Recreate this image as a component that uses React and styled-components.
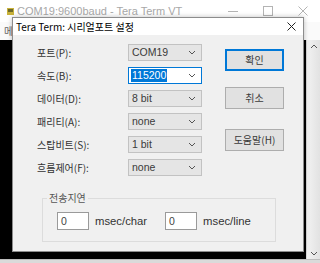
import React from "react";
import styled, { createGlobalStyle } from "styled-components";

const KR = `"Noto Sans CJK KR", "Noto Sans", sans-serif`;
const LAT = `"Liberation Sans", "Noto Sans CJK KR", sans-serif`;

const Global = createGlobalStyle`
  html, body { margin: 0; padding: 0; }
  body { width: 320px; height: 263px; overflow: hidden; background: #fff; font-family: ${KR}; }
`;

const Desktop = styled.div`
  position: relative;
  width: 320px;
  height: 263px;
  overflow: hidden;
`;

/* ---------- background Tera Term VT window ---------- */
const BgWindow = styled.div`
  display: flex;
  flex-direction: column;
  width: 100%;
  height: 100%;
  background: #fff;
`;

const BgTitleBar = styled.div`
  height: 22px;
  display: flex;
  align-items: center;
  padding: 0 0 0 7px;
  color: #a8a8a8;
  font: 11px/22px ${LAT};
`;

const BgTitleText = styled.span`
  margin-left: 3px;
  flex: 1;
`;

const WinCtl = styled.span`
  width: 35px;
  display: flex;
  justify-content: center;
  align-items: center;
`;

const BgMenu = styled.div`
  height: 18px;
  display: flex;
  align-items: center;
  padding-left: 4px;
  font: 10px/18px ${KR};
  color: #666;
  background: #fafafa;
`;

const BgMain = styled.div`
  flex: 1;
  display: flex;
`;

const Terminal = styled.div`
  flex: 1;
  background: #000;
`;

const Scrollbar = styled.div`
  width: 14px;
  display: flex;
  flex-direction: column;
  justify-content: space-between;
  align-items: center;
  background: linear-gradient(to right, #f2f2f2, #e2e2e2);
  border-left: 1px solid #d6d6d6;
  padding: 4px 0 3px;
  box-sizing: border-box;
`;

const BgBottom = styled.div`
  height: 3px;
  background: #dadada;
  border-top: 1px solid #bdbdbd;
`;

/* ---------- dialog ---------- */
const Dialog = styled.div`
  position: absolute;
  left: 12px;
  top: 17px;
  width: 292px;
  height: 235px;
  box-sizing: border-box;
  border: 1px solid #8c8c8c;
  background: #f0f0f0;
  display: flex;
  flex-direction: column;
  box-shadow: 0 0 5px rgba(0, 0, 0, 0.25);
`;

const DTitle = styled.div`
  height: 17px;
  flex: none;
  background: #fff;
  display: flex;
  align-items: center;
  justify-content: space-between;
  padding: 0 7px 0 3px;
  font: 10px/17px ${KR};
  color: #000;
`;

const DBody = styled.div`
  padding: 9px 0 0 24px;
  display: flex;
  flex-direction: column;
`;

const Top = styled.div`
  display: flex;
  align-items: flex-start;
`;

const FormGrid = styled.div`
  display: grid;
  grid-template-columns: 91px 74px;
  grid-auto-rows: 17px;
  row-gap: 6px;
  align-items: center;
`;

const Label = styled.span`
  font: 10px/17px ${KR};
  color: #333;
  white-space: nowrap;
`;

const Combo = styled.div`
  height: 17px;
  box-sizing: border-box;
  display: flex;
  align-items: center;
  justify-content: space-between;
  padding: 0 5px 0 2px;
  background: ${(p) => (p.$active ? "#fff" : "#e5e5e5")};
  border: 1px solid ${(p) => (p.$active ? "#0078d7" : "#c2c2c2")};
  font: 10.5px/13px ${LAT};
  color: #333;
`;

const ComboValue = styled.span`
  padding: 0 1px;
  background: ${(p) => (p.$selected ? "#0078d7" : "transparent")};
  color: ${(p) => (p.$selected ? "#fff" : "#3a3a3a")};
`;

const ButtonCol = styled.div`
  margin-left: 23px;
  padding-top: 5px;
  display: flex;
  flex-direction: column;
`;

const Button = styled.div`
  width: 59px;
  height: 22px;
  box-sizing: border-box;
  margin-top: ${(p) => p.$mt || 0}px;
  display: flex;
  align-items: center;
  justify-content: center;
  background: #e1e1e1;
  border: 1px solid ${(p) => (p.$default ? "#0078d7" : "#adadad")};
  box-shadow: ${(p) => (p.$default ? "inset 0 0 0 1px #0078d7" : "none")};
  font: 10px/20px ${KR};
  color: #3a3a3a;
`;

const Group = styled.fieldset`
  margin: 16px 0 0 5px;
  width: 234px;
  box-sizing: border-box;
  border: 1px solid #dcdcdc;
  padding: 0;
`;

const Legend = styled.legend`
  margin-left: 4px;
  padding: 0 2px;
  font: 10px/12px ${KR};
  color: #555;
`;

const GroupRow = styled.div`
  display: flex;
  align-items: center;
  gap: 18px;
  padding: 8px 0 11px 14px;
`;

const Pair = styled.div`
  display: flex;
  align-items: center;
  gap: 6px;
`;

const NumInput = styled.div`
  width: 32px;
  height: 18px;
  box-sizing: border-box;
  border: 1px solid #9a9a9a;
  background: #fff;
  padding-left: 3px;
  font: 10.5px/16px ${LAT};
  color: #444;
`;

const Unit = styled.span`
  font: 11.3px/16px ${LAT};
  color: #333;
`;

const Chevron = ({ up }) => (
  <svg width="8" height="5" viewBox="0 0 8 5">
    <polyline
      points={up ? "1,4 4,1 7,4" : "1,1 4,4 7,1"}
      fill="none"
      stroke="#555"
      strokeWidth="1"
    />
  </svg>
);

const rows = [
  { label: "포트(P):", value: "COM19" },
  { label: "속도(B):", value: "115200", active: true },
  { label: "데이터(D):", value: "8 bit" },
  { label: "패리티(A):", value: "none" },
  { label: "스탑비트(S):", value: "1 bit" },
  { label: "흐름제어(F):", value: "none" },
];

export default function App() {
  return (
    <Desktop>
      <Global />
      <BgWindow>
        <BgTitleBar>
          <svg width="7" height="7" viewBox="0 0 7 7">
            <rect x="0" y="0" width="7" height="7" fill="#c9b23a" />
            <rect x="1" y="1" width="5" height="3" fill="#6d6a2a" />
          </svg>
          <BgTitleText>COM19:9600baud - Tera Term VT</BgTitleText>
          <WinCtl>
            <svg width="10" height="10" viewBox="0 0 10 10">
              <line x1="0" y1="5.5" x2="10" y2="5.5" stroke="#b4b4b4" />
            </svg>
          </WinCtl>
          <WinCtl>
            <svg width="10" height="10" viewBox="0 0 10 10">
              <rect x="0.5" y="0.5" width="9" height="9" fill="none" stroke="#b4b4b4" />
            </svg>
          </WinCtl>
          <WinCtl>
            <svg width="10" height="10" viewBox="0 0 10 10">
              <path d="M0.5 0.5 L9.5 9.5 M9.5 0.5 L0.5 9.5" stroke="#b4b4b4" />
            </svg>
          </WinCtl>
        </BgTitleBar>
        <BgMenu>메</BgMenu>
        <BgMain>
          <Terminal />
          <Scrollbar>
            <Chevron up />
            <Chevron />
          </Scrollbar>
        </BgMain>
        <BgBottom />
      </BgWindow>

      <Dialog>
        <DTitle>
          <span>Tera Term: 시리얼포트 설정</span>
          <svg width="9" height="9" viewBox="0 0 9 9">
            <path d="M0.5 0.5 L8.5 8.5 M8.5 0.5 L0.5 8.5" stroke="#222" strokeWidth="1" />
          </svg>
        </DTitle>
        <DBody>
          <Top>
            <FormGrid>
              {rows.map((r) => (
                <React.Fragment key={r.label}>
                  <Label>{r.label}</Label>
                  <Combo $active={r.active}>
                    <ComboValue $selected={r.active}>{r.value}</ComboValue>
                    <Chevron />
                  </Combo>
                </React.Fragment>
              ))}
            </FormGrid>
            <ButtonCol>
              <Button $default>확인</Button>
              <Button $mt={16}>취소</Button>
              <Button $mt={20}>도움말(H)</Button>
            </ButtonCol>
          </Top>
          <Group>
            <Legend>전송지연</Legend>
            <GroupRow>
              <Pair>
                <NumInput>0</NumInput>
                <Unit>msec/char</Unit>
              </Pair>
              <Pair>
                <NumInput>0</NumInput>
                <Unit>msec/line</Unit>
              </Pair>
            </GroupRow>
          </Group>
        </DBody>
      </Dialog>
    </Desktop>
  );
}
